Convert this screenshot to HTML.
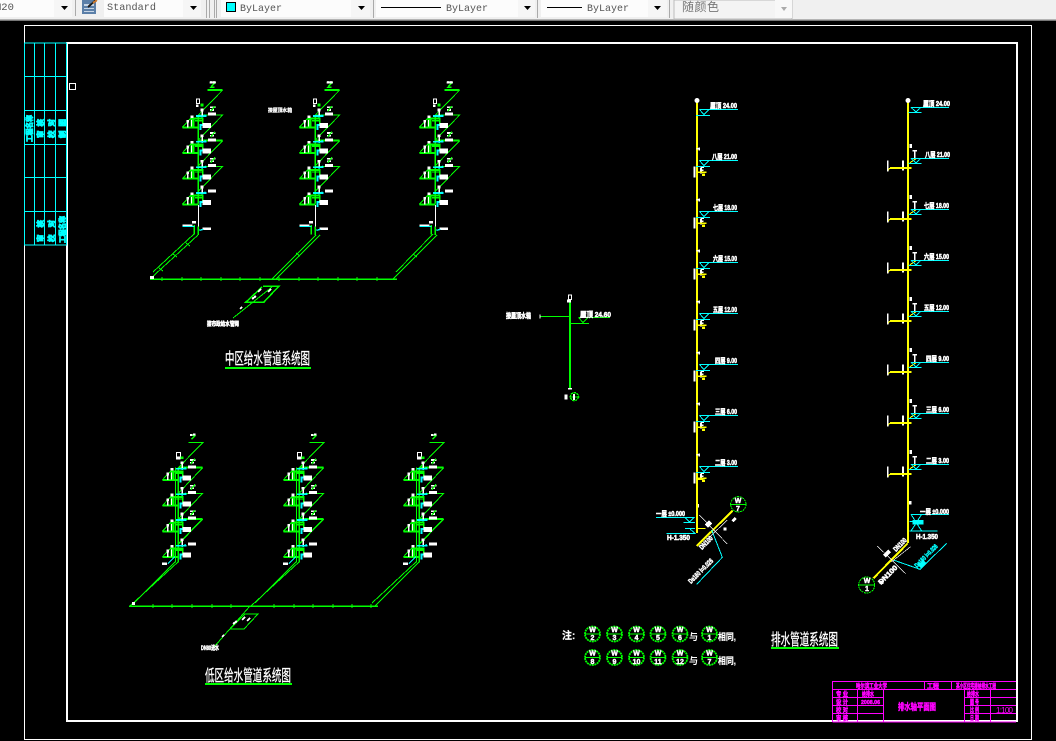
<!DOCTYPE html>
<html><head><meta charset="utf-8"><style>
html,body{margin:0;padding:0;background:#000;width:1056px;height:741px;overflow:hidden}
svg{display:block}
text{font-family:"Liberation Sans","Noto Sans CJK SC",sans-serif}
.cjk{font-family:"Noto Sans CJK SC",sans-serif}
.m{font-family:"Liberation Mono","Noto Sans CJK SC",monospace;font-size:10.5px;fill:#555}
.w{fill:#fff;font-size:7px;font-weight:700;stroke:#fff;stroke-width:.55}
.t{fill:#fff;font-size:16px;stroke:#fff;stroke-width:.3}
.p{fill:#f0f;font-size:6.5px;font-weight:700;stroke:#f0f;stroke-width:.5}
.c{fill:#0ff;font-size:7.5px;font-weight:700;stroke:#0ff;stroke-width:.8}
.n{fill:#fff;font-size:7px;font-weight:700;stroke:#fff;stroke-width:.45;text-anchor:middle}
</style></head><body>
<svg width="1056" height="741" viewBox="0 0 1056 741" xmlns="http://www.w3.org/2000/svg">
<defs>
<g id="fl" fill="none" shape-rendering="crispEdges">
<path d="M127 172L155 142" stroke="#0f0" stroke-width="3"/>
<path d="M127 172H175" stroke="#0f0" stroke-width="6"/>
<path d="M155 146H190" stroke="#0f0" stroke-width="6"/>
<path d="M158 145V172" stroke="#0f0" stroke-width="12"/>
<path d="M143 150V172" stroke="#fff" stroke-width="4"/>
<path d="M154 150V170" stroke="#fff" stroke-width="3"/>
<path d="M188 145V165" stroke="#0f0" stroke-width="4"/>
<path d="M165 152H188" stroke="#0f0" stroke-width="4"/>
<path d="M168 138H200" stroke="#0ff" stroke-width="5"/>
<path d="M178 165H190M181 166V180" stroke="#0ff" stroke-width="6"/>
<path d="M185 142L197 134" stroke="#0ff" stroke-width="3"/>
<path d="M187 122V136" stroke="#fff" stroke-width="4"/>
<rect x="182" y="116" width="9" height="8" fill="#fff"/>
<rect x="152" y="136" width="9" height="8" fill="#fff"/>
<rect x="139" y="150" width="8" height="8" fill="#fff"/>
<rect x="187" y="159" width="26" height="15" fill="#fff"/>
<rect x="204" y="128" width="24" height="9" fill="#fff"/>
</g>
<g id="zg" fill="none" shape-rendering="crispEdges">
<path d="M210 112H227M210 120H222" stroke="#fff" stroke-width="5"/>
<path d="M225 108L212 124" stroke="#0f0" stroke-width="4"/>
</g>
<g id="rs" fill="none" shape-rendering="crispEdges">
<path d="M203 60H248" stroke="#0f0" stroke-width="6"/>
<path d="M248 60L175 135" stroke="#0f0" stroke-width="3"/>
<path d="M210 36H227M227 36L212 52H224" stroke="#0f0" stroke-width="4"/>
<path d="M210 34h8v6h-8zM219 34h8v6h-8z" fill="#fff" stroke="#fff" stroke-width="1"/>
<rect x="169" y="87" width="9" height="14" stroke="#fff" stroke-width="3"/>
<rect x="168" y="103" width="8" height="8" fill="#fff"/>
<rect x="182" y="101" width="8" height="8" fill="#0f0"/>
<path d="M175 135H248L175 210" stroke="#0f0" stroke-width="3"/>
<path d="M175 212H248" stroke="#0f0" stroke-width="6"/>
<path d="M248 212L175 287" stroke="#0f0" stroke-width="3"/>
<path d="M175 289H248L175 364" stroke="#0f0" stroke-width="3"/>
<path d="M175 135V400" stroke="#0f0" stroke-width="4"/>
<use href="#fl"/>
<use href="#fl" y="77"/>
<use href="#fl" y="154"/>
<use href="#fl" y="231"/>
<use href="#zg"/>
<use href="#zg" y="77"/>
<use href="#zg" y="154"/>
</g>
<g id="rb" fill="none" shape-rendering="crispEdges">
<path d="M175 405V470" stroke="#fff" stroke-width="3"/>
<path d="M175 470V495M163 465V494" stroke="#0f0" stroke-width="4"/>
<rect x="127" y="464" width="30" height="5" fill="#fff"/>
<path d="M127 470H163" stroke="#0ff" stroke-width="3"/>
<rect x="156" y="453" width="12" height="8" fill="#fff"/>
<rect x="187" y="472" width="26" height="8" fill="#fff"/>
<path d="M178 481L190 478" stroke="#0ff" stroke-width="4"/>
</g>
<g id="rl" fill="none" shape-rendering="crispEdges">
<path d="M205 68H248L175 143" stroke="#0f0" stroke-width="3"/>
<path d="M212 46H226M226 46L214 58" stroke="#0f0" stroke-width="4"/>
<path d="M210 42h8v6h-8zM219 40h8v6h-8z" fill="#fff"/>
<rect x="170" y="98" width="11" height="13" stroke="#fff" stroke-width="3"/>
<rect x="168" y="112" width="14" height="7" fill="#fff"/>
<rect x="182" y="109" width="8" height="8" fill="#0f0"/>
<path d="M175 143H248" stroke="#0f0" stroke-width="6"/>
<path d="M248 143L175 220" stroke="#0f0" stroke-width="3"/>
<path d="M175 220H248L175 297" stroke="#0f0" stroke-width="3"/>
<path d="M175 297H248" stroke="#0f0" stroke-width="6"/>
<path d="M248 297L175 372" stroke="#0f0" stroke-width="4"/>
<path d="M175 143V427" stroke="#0f0" stroke-width="4"/>
<path d="M166 143V427" stroke="#0f0" stroke-width="3"/>
<use href="#fl" y="8"/>
<use href="#fl" y="85"/>
<use href="#fl" y="162"/>
<use href="#fl" y="239"/>
<use href="#zg" y="8"/>
<use href="#zg" y="85"/>
<use href="#zg" y="162"/>
<rect x="126" y="427" width="15" height="8" fill="#fff"/>
<path d="M144 431L165 410" stroke="#0ff" stroke-width="3"/>
</g>
<g id="d1" fill="none" shape-rendering="crispEdges">
<path d="M178 58H294M168 76H210M178 58L192 74L207 58" stroke="#0ff" stroke-width="3"/>
</g>
<g id="df" fill="none" shape-rendering="crispEdges">
<path d="M170 176H180" stroke="#fff" stroke-width="4"/>
<path d="M178 172V182" stroke="#fff" stroke-width="4"/>
<path d="M164 230V262" stroke="#fff" stroke-width="6"/>
<path d="M183 232H192M183 232V250M183 241H190" stroke="#fff" stroke-width="5"/>
<path d="M170 247H200" stroke="#ff0" stroke-width="4"/>
<path d="M186 250H195V258H186z" fill="#ff0"/>
</g>
<g id="e1" fill="none" shape-rendering="crispEdges">
<path d="M183 52H297M175 67H215M183 52L198 66L213 52" stroke="#0ff" stroke-width="3"/>
</g>
<g id="ef" fill="none" shape-rendering="crispEdges">
<rect x="179" y="162" width="7" height="12" fill="#fff"/>
<path d="M187 182H201M194 182V204" stroke="#fff" stroke-width="5"/>
<path d="M180 218L198 206" stroke="#ff0" stroke-width="3"/>
<path d="M113 212V244" stroke="#fff" stroke-width="4"/>
<path d="M159 212V242" stroke="#fff" stroke-width="7"/>
<path d="M115 240L120 234" stroke="#ff0" stroke-width="3"/>
<path d="M120 234H185" stroke="#ff0" stroke-width="6"/>
</g>
</defs>

<rect width="1056" height="741" fill="#000"/>
<!-- toolbar -->
<rect width="1056" height="19" fill="#f0f0f0"/>
<rect y="19" width="1056" height="1" fill="#b4b4b4"/>
<rect y="20" width="1056" height="1" fill="#777"/>
<g shape-rendering="crispEdges">
<rect x="0" y="0" width="72" height="17" fill="#fcfcfc"/><rect x="54" y="0" width="18" height="17" fill="#f6f6f6"/>
<rect x="75" y="0" width="1" height="16" fill="#aaa"/>
<rect x="104" y="0" width="97" height="17" fill="#fcfcfc"/><rect x="183" y="0" width="18" height="17" fill="#f6f6f6"/>
<rect x="206" y="0" width="1" height="18" fill="#aaa"/><rect x="209" y="0" width="1" height="18" fill="#aaa"/><rect x="214" y="0" width="1" height="18" fill="#aaa"/><rect x="216" y="0" width="1" height="18" fill="#aaa"/>
<rect x="221" y="0" width="149" height="17" fill="#fcfcfc"/><rect x="351" y="0" width="19" height="17" fill="#f6f6f6"/>
<rect x="373" y="0" width="1" height="18" fill="#aaa"/>
<rect x="376" y="0" width="159" height="17" fill="#fcfcfc"/><rect x="518" y="0" width="17" height="17" fill="#f6f6f6"/>
<rect x="537" y="0" width="1" height="18" fill="#aaa"/>
<rect x="541" y="0" width="126" height="17" fill="#fcfcfc"/><rect x="648" y="0" width="19" height="17" fill="#f6f6f6"/>
<rect x="669" y="0" width="1" height="18" fill="#aaa"/>
<rect x="674" y="0" width="118" height="19" fill="#f4f4f4" stroke="#bbb"/><rect x="775" y="0" width="17" height="18" fill="#f8f8f8"/>
<rect x="82" y="0" width="14" height="14" fill="#5b7fa8"/>
<path d="M84 4h10v2h-10zM84 8h10v1h-10zM84 11h10v1h-10z" fill="#c8d6e6"/>
<path d="M88 7L96 0" stroke="#222" stroke-width="2"/>
<path d="M93 3L97 0" stroke="#c87830" stroke-width="2"/>
<rect x="226.500" y="2.500" width="9" height="9" fill="#0ff" stroke="#000"/>
<rect x="381" y="7" width="60" height="1" fill="#000"/>
<rect x="547" y="7" width="35" height="1" fill="#000"/>
</g>
<path d="M61 6h7l-3.500 4z" fill="#000"/><path d="M190 6h7l-3.500 4z" fill="#000"/><path d="M358 6h7l-3.500 4z" fill="#000"/><path d="M524 6h7l-3.500 4z" fill="#000"/><path d="M654 6h7l-3.500 4z" fill="#000"/><path d="M781 7h6l-3 4z" fill="#aaa"/>
<text x="-5" y="10" class="m">M20</text>
<text x="107" y="10" class="m" textLength="49" lengthAdjust="spacingAndGlyphs">Standard</text>
<text x="240" y="11" class="m" textLength="42" lengthAdjust="spacingAndGlyphs">ByLayer</text>
<text x="446" y="11" class="m" textLength="42" lengthAdjust="spacingAndGlyphs">ByLayer</text>
<text x="587" y="11" class="m" textLength="42" lengthAdjust="spacingAndGlyphs">ByLayer</text>
<text x="682" y="11" font-size="12" fill="#777" class="cjk" textLength="37">随颜色</text>

<!-- frames -->
<g fill="none" shape-rendering="crispEdges">
<rect x="24.500" y="25.500" width="1007" height="714" stroke="#fff" stroke-width="1"/>
<rect x="67" y="43" width="950" height="678" stroke="#fff" stroke-width="2"/>
<rect x="69.500" y="83.500" width="6" height="6" stroke="#fff"/>
<path d="M24.500 43H66.500V245H24.500ZM34.500 43V245M44.500 43V245M55.500 43V245M24 76.500H67M24 110.500H67M24 144.500H67M24 177.500H67M24 211.500H67" stroke="#0ff" stroke-width="1"/>
</g>
<text transform="translate(32,142) rotate(-90)" class="c" textLength="27" lengthAdjust="spacingAndGlyphs">工程名称</text>
<text transform="translate(43,138) rotate(-90)" class="c" textLength="19">审核</text>
<text transform="translate(54,138) rotate(-90)" class="c" textLength="19">校对</text>
<text transform="translate(65,138) rotate(-90)" class="c" textLength="19">制图</text>
<text transform="translate(43,242) rotate(-90)" class="c" textLength="22">审核</text>
<text transform="translate(54,242) rotate(-90)" class="c" textLength="22">校对</text>
<text transform="translate(65,243) rotate(-90)" class="c" textLength="27" lengthAdjust="spacingAndGlyphs">工程名称</text>

<!-- mid zone -->
<g transform="translate(140,70) scale(.33333)"><use href="#rs"/><use href="#rb"/></g>
<g transform="translate(257,70) scale(.33333)"><use href="#rs"/><use href="#rb"/></g>
<g transform="translate(377,70) scale(.33333)"><use href="#rs"/><use href="#rb"/></g>
<g fill="none" stroke="#0f0" shape-rendering="crispEdges">
<path d="M150 279H397" stroke-width="1.500"/>
<path d="M198 235L150 279M194 234L153 272M316 235L272 279M320 235L276 279M437 235L393 279M433 234L396 272" stroke-width="1"/>
<path d="M162 277v4M182 277v4M201 277v4M221 277v4M240 277v4M260 277v4M279 277v4M299 277v4M318 277v4M338 277v4M357 277v4M377 277v4" stroke-width="1"/>
<path d="M159 268l4 3M173 254l4 3M186 243l4 3M296 253l4 3M413 254l4 3" stroke-width="1"/>
<path d="M272 287L233 318" stroke-width="1"/>
<path d="M263 286H279L264 302H246L262 287" stroke-width="1.500"/>
</g>
<rect x="150" y="276" width="4" height="3" fill="#fff"/>
<path d="M252 299l4-3M258 292l3-3M268 292l3-3M240 309l2-2" stroke="#fff" stroke-width="2" shape-rendering="crispEdges"/>
<text x="207" y="326" class="w" style="font-size:6px" textLength="32" lengthAdjust="spacingAndGlyphs">接市政给水管网</text>
<text x="268" y="112" class="w" style="font-size:5px;stroke-width:.3" textLength="24" lengthAdjust="spacingAndGlyphs">接屋顶水箱</text>
<text x="225" y="364" class="t" textLength="85" lengthAdjust="spacingAndGlyphs">中区给水管道系统图</text>
<rect x="225" y="367" width="86" height="2" fill="#0f0" shape-rendering="crispEdges"/>

<!-- low zone -->
<g transform="translate(120,420) scale(.33333)"><use href="#rl"/></g>
<g transform="translate(241,420) scale(.33333)"><use href="#rl"/></g>
<g transform="translate(361,420) scale(.33333)"><use href="#rl"/></g>
<g fill="none" stroke="#0f0" shape-rendering="crispEdges">
<path d="M129 606H378" stroke-width="1.500"/>
<path d="M178 562L130 606M175 562L134 603M299 562L251 606M296 562L255 603M419 562L375 606M416 562L372 603" stroke-width="1"/>
<path d="M153 604v4M172 604v4M192 604v4M212 604v4M231 604v4M274 604v4M294 604v4M313 604v4M333 604v4M352 604v4M371 604v4" stroke-width="1"/>
<path d="M250 606L214 647" stroke-width="1"/>
<path d="M245 614H258L244 629H230Z" stroke-width="1"/>
</g>
<rect x="132" y="602" width="3" height="3" fill="#fff"/>
<path d="M242 620l3-3M233 624l4-3M247 621l3-3M222 637l2-2" stroke="#fff" stroke-width="2" shape-rendering="crispEdges"/>
<text x="201" y="650" class="w" style="font-size:6px" textLength="18" lengthAdjust="spacingAndGlyphs">DN80进水</text>
<text x="205" y="681" class="t" textLength="86" lengthAdjust="spacingAndGlyphs">低区给水管道系统图</text>
<rect x="205" y="683" width="87" height="2" fill="#0f0" shape-rendering="crispEdges"/>

<!-- centre -->
<g transform="translate(500,285) scale(.33333)" fill="none" shape-rendering="crispEdges">
<rect x="205" y="30" width="10" height="14" stroke="#fff" stroke-width="3"/>
<rect x="201" y="44" width="12" height="8" fill="#fff"/>
<path d="M210 52V310" stroke="#0f0" stroke-width="6"/>
<path d="M120 94H208M213 115H267M235 97H330M237 99L249 113L262 99" stroke="#0f0" stroke-width="3"/>
<path d="M120 88V100" stroke="#fff" stroke-width="3"/>
<rect x="204" y="309" width="12" height="5" fill="#fff"/>
<circle cx="223" cy="335" r="12" stroke="#0f0" stroke-width="4" stroke-dasharray="7 2"/>
<path d="M208 336H238" stroke="#0f0" stroke-width="2"/>
<rect x="219" y="327" width="6" height="18" fill="#fff"/>
<rect x="193" y="328" width="10" height="16" fill="#fff"/>
</g>
<text x="506" y="318" class="w" textLength="25" lengthAdjust="spacingAndGlyphs">接屋顶水箱</text>
<text x="580" y="317" class="w" style="font-size:7.5px" textLength="31" lengthAdjust="spacingAndGlyphs">屋顶 24.60</text>

<!-- drain 1 -->
<rect x="696" y="100" width="2" height="433" fill="#ff0" shape-rendering="crispEdges"/>
<circle cx="697" cy="100.500" r="2.500" fill="#fff"/>
<g transform="translate(640,90) scale(.33333)">
<use href="#d1"/><use href="#df"/>
<use href="#d1" y="153"/><use href="#df" y="153"/>
<use href="#d1" y="306"/><use href="#df" y="306"/>
<use href="#d1" y="459"/><use href="#df" y="459"/>
<use href="#d1" y="612"/><use href="#df" y="612"/>
<use href="#d1" y="765"/><use href="#df" y="765"/>
<use href="#d1" y="918"/><use href="#df" y="918"/>
<use href="#d1" y="1071"/>
</g>
<g transform="translate(640,450) scale(.33333)" fill="none" shape-rendering="crispEdges">
<path d="M164 68V98" stroke="#fff" stroke-width="6"/>
<path d="M170 85H200M172 88H190" stroke="#ff0" stroke-width="4"/>
<path d="M176 162V172" stroke="#fff" stroke-width="3"/>
<path d="M170 288L278 182" stroke="#ff0" stroke-width="6"/>
<path d="M170 236H196" stroke="#ff0" stroke-width="3"/>
<path d="M48 202H135L148 216L162 202H135M130 217H165M135 235H165M80 250H165L150 237" stroke="#0ff" stroke-width="3"/>
<path d="M215 240L247 322L170 403" stroke="#0ff" stroke-width="3"/>
<path d="M178 195L262 282M205 265L262 210" stroke="#fff" stroke-width="2"/>
<circle cx="295" cy="163" r="23" stroke="#0f0" stroke-width="3" stroke-dasharray="6 2"/>
<path d="M270 163H320" stroke="#0f0" stroke-width="3"/>
<rect x="196" y="215" width="18" height="14" fill="#fff" transform="rotate(-45 205 222)"/>
<rect x="250" y="232" width="10" height="10" fill="#fff"/>
<rect x="275" y="205" width="14" height="8" fill="#fff" transform="rotate(-45 282 209)"/>
</g>
<text x="738" y="503" class="n">W</text>
<text x="738" y="511" class="n">7</text>
<text x="710" y="108" class="w" textLength="27" lengthAdjust="spacingAndGlyphs">屋顶 24.00</text>
<text x="712" y="159" class="w" textLength="25" lengthAdjust="spacingAndGlyphs">八层 21.00</text>
<text x="713" y="210" class="w" textLength="24" lengthAdjust="spacingAndGlyphs">七层 18.00</text>
<text x="713" y="261" class="w" textLength="24" lengthAdjust="spacingAndGlyphs">六层 15.00</text>
<text x="713" y="312" class="w" textLength="24" lengthAdjust="spacingAndGlyphs">五层 12.00</text>
<text x="715" y="363" class="w" textLength="22" lengthAdjust="spacingAndGlyphs">四层 9.00</text>
<text x="715" y="414" class="w" textLength="22" lengthAdjust="spacingAndGlyphs">三层 6.00</text>
<text x="715" y="465" class="w" textLength="22" lengthAdjust="spacingAndGlyphs">二层 3.00</text>
<text x="656" y="516" class="w" textLength="29" lengthAdjust="spacingAndGlyphs">一层 ±0.000</text>
<text x="667" y="540" class="w" textLength="23" lengthAdjust="spacingAndGlyphs">H-1.350</text>
<text transform="translate(691,584) rotate(-45)" class="w" textLength="32" lengthAdjust="spacingAndGlyphs">De160 i=0.026</text>
<text transform="translate(702,550) rotate(-45)" class="w" textLength="16" lengthAdjust="spacingAndGlyphs">DN100</text>

<!-- drain 2 -->
<rect x="907" y="102" width="2" height="441" fill="#ff0" shape-rendering="crispEdges"/>
<circle cx="908" cy="100.500" r="2.500" fill="#fff"/>
<g transform="translate(850,90) scale(.33333)">
<use href="#e1"/><use href="#ef"/>
<use href="#e1" y="153"/><use href="#ef" y="153"/>
<use href="#e1" y="306"/><use href="#ef" y="306"/>
<use href="#e1" y="459"/><use href="#ef" y="459"/>
<use href="#e1" y="612"/><use href="#ef" y="612"/>
<use href="#e1" y="765"/><use href="#ef" y="765"/>
<use href="#e1" y="918"/><use href="#ef" y="918"/>
<use href="#e1" y="1071"/>
</g>
<g transform="translate(850,480) scale(.33333)" fill="none" shape-rendering="crispEdges">
<rect x="177" y="63" width="8" height="11" fill="#fff"/>
<path d="M183 103H297M178 125H218M178 153H263M183 103L215 153M215 103L183 153" stroke="#0ff" stroke-width="3"/>
<rect x="188" y="120" width="32" height="14" fill="#0ff"/>
<path d="M173 190L70 295" stroke="#ff0" stroke-width="6"/>
<path d="M130 240L210 268L290 190" stroke="#0ff" stroke-width="3"/>
<path d="M82 198L168 282M125 245L182 200" stroke="#fff" stroke-width="2"/>
<circle cx="50" cy="315" r="24" stroke="#0f0" stroke-width="3" stroke-dasharray="6 2"/>
<path d="M25 315H75" stroke="#0f0" stroke-width="3"/>
<rect x="205" y="245" width="22" height="14" fill="#0ff" transform="rotate(-45 216 252)"/>
<rect x="100" y="215" width="22" height="12" fill="#fff" transform="rotate(-45 111 221)"/>
<rect x="88" y="303" width="12" height="9" fill="#fff"/>
</g>
<text x="867" y="583" class="n">W</text>
<text x="867" y="591" class="n">1</text>
<text x="923" y="106" class="w" textLength="27" lengthAdjust="spacingAndGlyphs">屋顶 24.00</text>
<text x="925" y="157" class="w" textLength="25" lengthAdjust="spacingAndGlyphs">八层 21.00</text>
<text x="924" y="208" class="w" textLength="25" lengthAdjust="spacingAndGlyphs">七层 18.00</text>
<text x="924" y="259" class="w" textLength="25" lengthAdjust="spacingAndGlyphs">六层 15.00</text>
<text x="924" y="310" class="w" textLength="25" lengthAdjust="spacingAndGlyphs">五层 12.00</text>
<text x="926" y="361" class="w" textLength="23" lengthAdjust="spacingAndGlyphs">四层 9.00</text>
<text x="926" y="412" class="w" textLength="23" lengthAdjust="spacingAndGlyphs">三层 6.00</text>
<text x="926" y="463" class="w" textLength="23" lengthAdjust="spacingAndGlyphs">二层 3.00</text>
<text x="920" y="514" class="w" textLength="29" lengthAdjust="spacingAndGlyphs">一层 ±0.000</text>
<text x="916" y="539" class="w" textLength="22" lengthAdjust="spacingAndGlyphs">H-1.350</text>
<text transform="translate(917,568) rotate(-45)" class="c" style="font-size:6.5px;stroke-width:.5" textLength="30" lengthAdjust="spacingAndGlyphs">De160 i=0.026</text>
<text transform="translate(881,585) rotate(-45)" class="w" textLength="24" lengthAdjust="spacingAndGlyphs">DN100</text>
<text transform="translate(896,552) rotate(-45)" class="w" textLength="16" lengthAdjust="spacingAndGlyphs">DN100</text>

<!-- notes -->
<g fill="none" stroke="#0f0" stroke-width="1.800" stroke-dasharray="2 .6">
<circle cx="592.500" cy="634" r="7.500"/><circle cx="614.500" cy="634" r="7.500"/><circle cx="636.500" cy="634" r="7.500"/><circle cx="658" cy="634" r="7.500"/><circle cx="680" cy="634" r="7.500"/><circle cx="709.500" cy="634" r="7.500"/>
<circle cx="592.500" cy="657.500" r="7.500"/><circle cx="614.500" cy="657.500" r="7.500"/><circle cx="636.500" cy="657.500" r="7.500"/><circle cx="658" cy="657.500" r="7.500"/><circle cx="680" cy="657.500" r="7.500"/><circle cx="709.500" cy="657.500" r="7.500"/>
</g>
<path d="M585 634h15M607 634h15M629 634h15M651 634h15M673 634h15M702 634h15M585 657.500h15M607 657.500h15M629 657.500h15M651 657.500h15M673 657.500h15M702 657.500h15" stroke="#0f0" stroke-width="1" shape-rendering="crispEdges"/>
<text x="592.500" y="632" class="n">W</text><text x="592.500" y="640" class="n">2</text>
<text x="614.500" y="632" class="n">W</text><text x="614.500" y="640" class="n">3</text>
<text x="636.500" y="632" class="n">W</text><text x="636.500" y="640" class="n">4</text>
<text x="658" y="632" class="n">W</text><text x="658" y="640" class="n">5</text>
<text x="680" y="632" class="n">W</text><text x="680" y="640" class="n">6</text>
<text x="709.500" y="632" class="n">W</text><text x="709.500" y="640" class="n">1</text>
<text x="592.500" y="655.500" class="n">W</text><text x="592.500" y="664" class="n">8</text>
<text x="614.500" y="655.500" class="n">W</text><text x="614.500" y="664" class="n">9</text>
<text x="636.500" y="655.500" class="n">W</text><text x="636.500" y="664" class="n">10</text>
<text x="658" y="655.500" class="n">W</text><text x="658" y="664" class="n">11</text>
<text x="680" y="655.500" class="n">W</text><text x="680" y="664" class="n">12</text>
<text x="709.500" y="655.500" class="n">W</text><text x="709.500" y="664" class="n">7</text>
<text x="562" y="639" class="w" style="font-size:10px;stroke-width:.2">注:</text>
<text x="689" y="640" class="w" style="font-size:9px;stroke-width:0">与</text>
<text x="689" y="664" class="w" style="font-size:9px;stroke-width:0">与</text>
<text x="718" y="640" class="w" style="font-size:9px;stroke-width:.2" textLength="18" lengthAdjust="spacingAndGlyphs">相同,</text>
<text x="718" y="664" class="w" style="font-size:9px;stroke-width:.2" textLength="18" lengthAdjust="spacingAndGlyphs">相同,</text>
<text x="771" y="645" class="t" textLength="67" lengthAdjust="spacingAndGlyphs">排水管道系统图</text>
<rect x="771" y="647" width="68" height="2" fill="#0f0" shape-rendering="crispEdges"/>

<!-- title block -->
<g fill="none" stroke="#f0f" stroke-width="1" shape-rendering="crispEdges">
<path d="M832.500 681.500H1016M832.500 689.500H1016M832.500 722H1016M832.500 681V722M857.500 689V722M883.500 689V722M964.500 689V722M990.500 689V722M924.500 681V689M951.500 681V689M832 697.500H883M832 705.500H883M832 713.500H883M964 697.500H1016M964 705.500H1016M964 713.500H1016"/>
</g>
<text x="856" y="688" class="p" textLength="31" lengthAdjust="spacingAndGlyphs">哈尔滨工业大学</text>
<text x="927" y="688" class="p" textLength="12" lengthAdjust="spacingAndGlyphs">工程</text>
<text x="956" y="688" class="p" textLength="40" lengthAdjust="spacingAndGlyphs">某小区住宅楼给排水工程</text>
<text x="836" y="696" class="p" textLength="12" lengthAdjust="spacingAndGlyphs">专 业</text>
<text x="836" y="704" class="p" textLength="12" lengthAdjust="spacingAndGlyphs">设 计</text>
<text x="836" y="712" class="p" textLength="12" lengthAdjust="spacingAndGlyphs">校 对</text>
<text x="836" y="720" class="p" textLength="12" lengthAdjust="spacingAndGlyphs">审 核</text>
<text x="862" y="696" class="p" textLength="12" lengthAdjust="spacingAndGlyphs">给排水</text>
<text x="861" y="704" class="p" style="font-size:5.5px" textLength="19" lengthAdjust="spacingAndGlyphs">2008.06</text>
<text x="898" y="710" class="p" style="font-size:9px" textLength="38" lengthAdjust="spacingAndGlyphs">排水轴平面图</text>
<text x="967" y="696" class="p" textLength="12" lengthAdjust="spacingAndGlyphs">给排水</text>
<text x="970" y="704" class="p" textLength="9" lengthAdjust="spacingAndGlyphs">图 号</text>
<text x="970" y="712" class="p" textLength="9" lengthAdjust="spacingAndGlyphs">比 例</text>
<text x="970" y="720" class="p" textLength="9" lengthAdjust="spacingAndGlyphs">日 期</text>
<text x="996" y="713" class="p" style="font-size:8px;stroke-width:0;font-weight:400" textLength="17">1:100</text>
</svg>
</body></html>
